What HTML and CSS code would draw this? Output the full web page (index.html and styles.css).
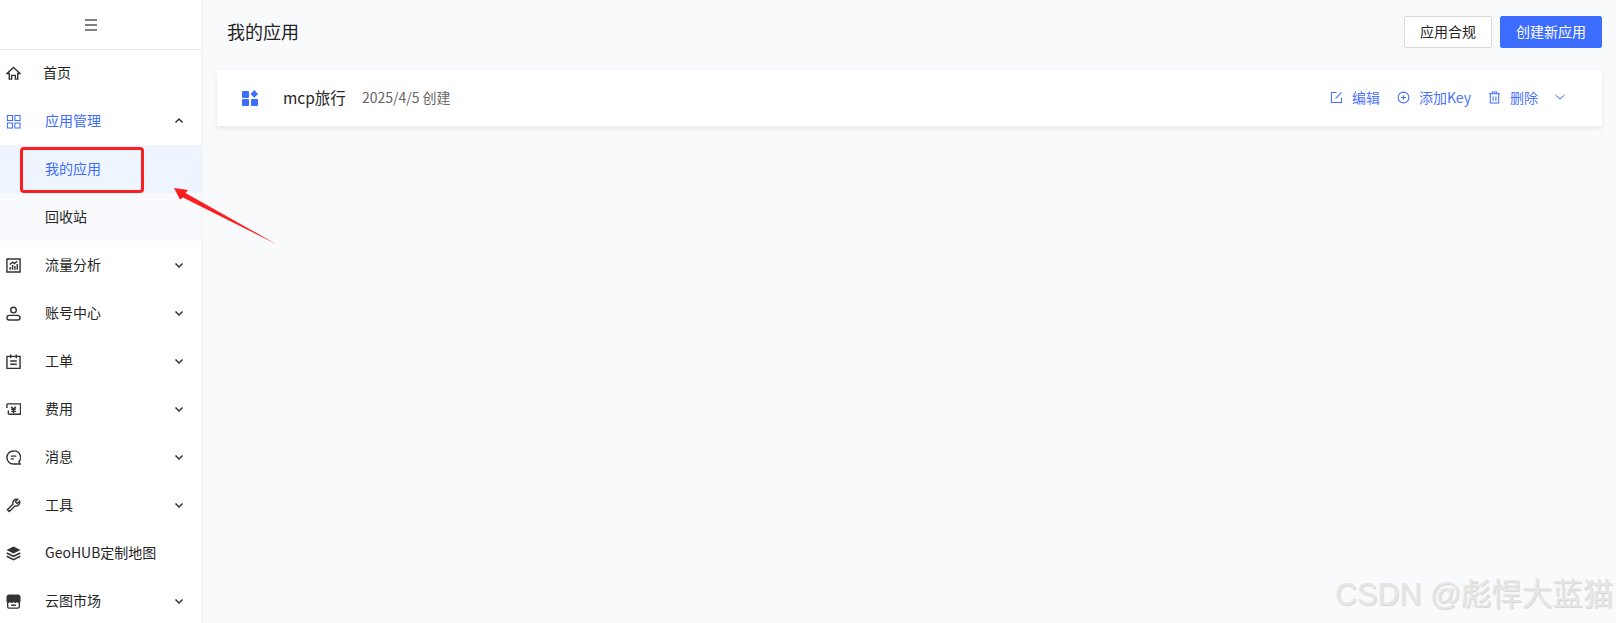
FILE: index.html
```html
<!DOCTYPE html>
<html lang="zh-CN">
<head>
<meta charset="utf-8">
<title>我的应用</title>
<link rel="stylesheet" href="styles.css">
</head>
<body>
<div class="app">
  <aside class="sidebar">
    <div class="collapse">
      <svg class="burger" viewBox="0 0 14 14"><path d="M1 2h12M1 7h12M1 12h12"/></svg>
    </div>
    <nav class="menu">
      <div class="item home">
        <svg class="ico" viewBox="0 0 16 16"><path d="M1 8 8 1.500 15 8h-2.500v6H10V10H6v4H3.500V8z"/></svg>
        <span class="label">首页</span>
      </div>
      <div class="item active">
        <svg class="ico" viewBox="0 0 16 16"><path d="M1.500 1.500h5.500v5.500H1.500zM9.500 1.500H15v5.500H9.500zM1.500 9.500h5.500V15H1.500zM9.500 9.500H15V15H9.500z"/></svg>
        <span class="label">应用管理</span>
        <svg class="chev" viewBox="0 0 10 10"><path d="M1.500 6.500 5 3l3.500 3.500"/></svg>
      </div>
      <div class="sub current">我的应用</div>
      <div class="sub">回收站</div>
      <div class="item">
        <svg class="ico" viewBox="0 0 16 16"><path d="M1 1h14v14H1zM4.500 12.500V9.500M7 12.500V7.500M9.500 12.500V8.500M12 12.500V6.500M4 7l3-2.500 2 1.500 3-2.500"/></svg>
        <span class="label">流量分析</span>
        <svg class="chev" viewBox="0 0 10 10"><path d="M1.500 3.500 5 7l3.500-3.500"/></svg>
      </div>
      <div class="item">
        <svg class="ico" viewBox="0 0 16 16"><circle cx="8" cy="4.300" r="3"/><rect x="1" y="10" width="14" height="5" rx="2.500"/></svg>
        <span class="label">账号中心</span>
        <svg class="chev" viewBox="0 0 10 10"><path d="M1.500 3.500 5 7l3.500-3.500"/></svg>
      </div>
      <div class="item">
        <svg class="ico" viewBox="0 0 16 16"><path d="M1 2.500h14v13H1zM5 .5v4M11 .5v4M4.500 7.500h7M4.500 11h7"/></svg>
        <span class="label">工单</span>
        <svg class="chev" viewBox="0 0 10 10"><path d="M1.500 3.500 5 7l3.500-3.500"/></svg>
      </div>
      <div class="item">
        <svg class="ico" viewBox="0 0 16 16"><path d="M1 2h14.500v11H2.500M1 2v4.500M2.500 9v4M5.500 5l2.500 2.500L10.500 5M5.500 7.700h5M5.500 10h5M8 7.500V12"/></svg>
        <span class="label">费用</span>
        <svg class="chev" viewBox="0 0 10 10"><path d="M1.500 3.500 5 7l3.500-3.500"/></svg>
      </div>
      <div class="item">
        <svg class="ico" viewBox="0 0 16 16"><path d="M8 1a7 7 0 1 0 0 14h7l-1.200-2.400A7 7 0 0 0 8 1zM5 6.500h6M5 9.500h3.500"/></svg>
        <span class="label">消息</span>
        <svg class="chev" viewBox="0 0 10 10"><path d="M1.500 3.500 5 7l3.500-3.500"/></svg>
      </div>
      <div class="item">
        <svg class="ico" viewBox="0 0 16 16"><path d="M14.500 3.500 12 6 10 4l2.500-2.500A4 4 0 0 0 7.500 6.500L1.500 12.500 3.500 14.500l6-6a4 4 0 0 0 5-5z"/></svg>
        <span class="label">工具</span>
        <svg class="chev" viewBox="0 0 10 10"><path d="M1.500 3.500 5 7l3.500-3.500"/></svg>
      </div>
      <div class="item">
        <svg class="ico ico-fill" viewBox="0 0 16 16"><path d="M8 .5 15.500 4.300 8 8.100.5 4.300z"/><path class="thick" d="M.8 7.500 8 11l7.200-3.500M.8 11 8 14.500l7.200-3.500"/></svg>
        <span class="label">GeoHUB定制地图</span>
      </div>
      <div class="item">
        <svg class="ico ico-fill" viewBox="0 0 16 16"><path d="M4 .5h8A3 3 0 0 1 15.500 4v3.500a2 2 0 0 1-3.700 1 2.300 2.300 0 0 1-3.800 0 2.300 2.300 0 0 1-3.800 0 2 2 0 0 1-3.700-1V4A3 3 0 0 1 4 .5z"/><path class="thin" d="M1.800 8v5.500a1.500 1.500 0 0 0 1.500 1.500h9.400a1.500 1.500 0 0 0 1.500-1.500V8M5.500 12h5"/></svg>
        <span class="label">云图市场</span>
        <svg class="chev" viewBox="0 0 10 10"><path d="M1.500 3.500 5 7l3.500-3.500"/></svg>
      </div>
    </nav>
  </aside>

  <main class="content">
    <header class="topbar">
      <h1 class="title">我的应用</h1>
      <div class="buttons">
        <button class="btn">应用合规</button>
        <button class="btn primary">创建新应用</button>
      </div>
    </header>
    <section class="card">
      <svg class="app-ico" viewBox="0 0 16 16"><rect x="0" y="1" width="7" height="7" rx="1"/><path d="M12.300 0 16 3.900 12.300 7.800 8.600 3.900z"/><rect x="0" y="9" width="7" height="7" rx="1"/><rect x="9" y="9" width="7" height="7" rx="1"/></svg>
      <span class="app-name">mcp旅行</span>
      <span class="app-date">2025/4/5 创建</span>
      <div class="actions">
        <a class="action">
          <svg viewBox="0 0 14 14"><path d="M7 1.500H1.500v11h11V7M6 8l6.500-6.500"/></svg>
          <span>编辑</span>
        </a>
        <a class="action">
          <svg viewBox="0 0 14 14"><circle cx="7" cy="7" r="5.800"/><path d="M4.500 7h5M7 4.500v5"/></svg>
          <span>添加Key</span>
        </a>
        <a class="action">
          <svg viewBox="0 0 14 14"><path d="M1 3h12M4.500 3V1h5v2M2.500 3v10h9V3M5.500 6v4.500M8.500 6v4.500"/></svg>
          <span>删除</span>
        </a>
        <svg class="action-chev" viewBox="0 0 10 10"><path d="M.5 3 5 7l4.500-4"/></svg>
      </div>
    </section>
  </main>
</div>

<div class="callout-box"></div>
<svg class="callout-arrow" viewBox="0 0 110 60"><path d="M0 0 14 2 11.500 5 102 56 9 9.500 6 11.500z"/></svg>
<div class="watermark">CSDN @彪悍大蓝猫</div>
</body>
</html>
```
FILE: styles.css
```css
* {
  box-sizing: border-box;
}

html,
body {
  margin: 0;
  height: 100%;
  overflow: hidden;
}

body {
  font-family: "Noto Sans CJK SC", "Noto Sans", sans-serif;
  color: #262626;
  background: #f9fafc;
  position: relative;
}

.app {
  display: flex;
  height: 623px;
}

.sidebar {
  flex: 0 0 201px;
  background: #fff;
  box-shadow: 1px 0 3px rgba(0, 0, 0, 0.04);
  overflow: hidden;
}

.collapse {
  height: 50px;
  border-bottom: 1px solid #e6e6e6;
  display: flex;
  justify-content: center;
  align-items: center;
  padding: 0 20px 0 0;
}

.burger {
  width: 14px;
  height: 14px;
  fill: none;
  stroke: #555;
  stroke-width: 1.400;
}

.item {
  height: 48px;
  display: flex;
  align-items: center;
  padding: 0 17px 0 6px;
  font-size: 14px;
}

.ico {
  flex: 0 0 15px;
  width: 15px;
  height: 15px;
  margin-right: 24px;
  fill: none;
  stroke: #333;
  stroke-width: 1.500;
}

.home {
  margin-top: -1px;
}

.home .ico {
  margin-right: 22px;
}

.ico-fill {
  fill: #333;
  stroke: none;
}

.ico-fill .thick {
  fill: none;
  stroke: #333;
  stroke-width: 1.700;
}

.ico-fill .thin {
  fill: none;
  stroke: #333;
  stroke-width: 1.400;
}

.label {
  flex: 1;
  white-space: nowrap;
  padding-bottom: 2px;
}

.chev {
  width: 10px;
  height: 10px;
  fill: none;
  stroke: #333;
  stroke-width: 1.500;
}

.active .label {
  color: #3d6dff;
}

.active .ico {
  stroke: #3d6dff;
  stroke-width: 1.100;
}

.sub {
  height: 48px;
  line-height: 46px;
  padding-left: 45px;
  font-size: 14px;
  background: #f9fafd;
}

.current {
  background: #eff5ff;
  color: #3d6dff;
}

.content {
  flex: 1;
  min-width: 0;
  padding: 16px 14px 0 16px;
}

.topbar {
  display: flex;
  justify-content: space-between;
  align-items: center;
  height: 32px;
  padding-left: 11px;
}

.title {
  margin: 0 0 3px -1px;
  font-size: 18px;
  font-weight: 400;
  color: #222;
}

.buttons {
  display: flex;
  gap: 8px;
}

.btn {
  height: 32px;
  font: inherit;
  font-size: 14px;
  line-height: 28px;
  color: #262626;
  background: #fff;
  border: 1px solid #d9d9d9;
  border-radius: 2px;
  width: 88px;
  padding: 0 0 2px;
}

.btn.primary {
  width: 102px;
  color: #fff;
  background: #3d6dff;
  border-color: #3d6dff;
}

.card {
  height: 56px;
  margin-top: 22px;
  background: #fff;
  box-shadow: 0 2px 5px rgba(0, 0, 0, 0.08);
  display: flex;
  align-items: center;
  padding: 0 37px 0 25px;
}

.app-ico {
  width: 16px;
  height: 16px;
  fill: #3d6dff;
  margin-right: 25px;
}

.app-name {
  font-size: 15.500px;
  color: #262626;
  margin: 0 16px 2px 0;
}

.app-date {
  font-size: 14px;
  color: #666;
  margin-bottom: 2px;
}

.actions {
  margin-left: auto;
  display: flex;
  align-items: center;
  gap: 17px;
  margin-bottom: 2px;
}

.action {
  display: flex;
  align-items: center;
  gap: 9px;
  font-size: 14px;
  color: #4d74ff;
}

.action svg {
  width: 13px;
  height: 13px;
  fill: none;
  stroke: #3d6dff;
  stroke-width: 1.100;
}

.action-chev {
  width: 10px;
  height: 10px;
  fill: none;
  stroke: #3d6dff;
  stroke-width: 1;
}

.callout-box {
  position: absolute;
  left: 20px;
  top: 147px;
  width: 124px;
  height: 46px;
  border: 3px solid #fb1e1e;
  border-radius: 4px;
}

.callout-arrow {
  position: absolute;
  left: 174px;
  top: 188px;
  width: 110px;
  height: 60px;
  fill: #fb1e1e;
}

.watermark {
  position: absolute;
  left: 1335px;
  top: 572px;
  font-family: "Liberation Sans", "Noto Sans CJK SC", sans-serif;
  font-size: 30.500px;
  line-height: 44px;
  white-space: nowrap;
  color: #e6e6e6;
  text-shadow: 1px 1px 1px #d4d4d4;
}
```
